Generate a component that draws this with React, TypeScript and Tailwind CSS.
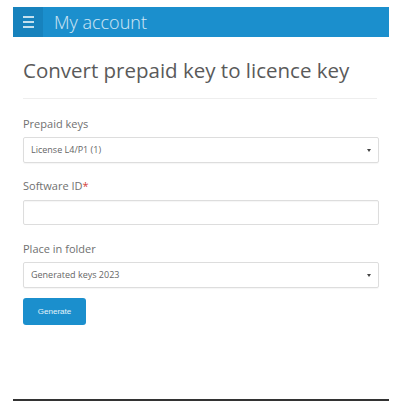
export default function App() {
	return (
		<div className="w-[402px] h-[402px] bg-white font-['Open_Sans',sans-serif] px-[13px] pt-[7px] flex flex-col">
			<header className="flex h-[30px] bg-[#1b8fcd]">
				<div className="w-[30px] bg-[#1782bd] flex items-center justify-center">
					<div className="flex flex-col gap-[3px]">
						<span className="block w-[11px] h-[2px] bg-white/75" />
						<span className="block w-[11px] h-[2px] bg-white/75" />
						<span className="block w-[11px] h-[2px] bg-white/75" />
					</div>
				</div>
				<h1 className="pl-[11px] text-[18px] font-light text-white/80 leading-[30px]">My account</h1>
			</header>

			<main className="px-[10px] pt-[18px] flex-1">
				<h2 className="text-[20.5px] leading-[30px] text-[#5a5a5a] font-normal">Convert prepaid key to licence key</h2>
				<hr className="mt-[13px] mr-[2px] border-t border-[#eee]" />

				<div className="pt-[18px]">
					<label className="block text-[11px] text-[#707070] leading-[14px]">Prepaid keys</label>
					<SelectBox value="License L4/P1 (1)" />

					<label className="block mt-[16px] text-[11px] text-[#707070] leading-[14px]">
						Software ID<span className="text-[#d43f3a]">*</span>
					</label>
					<div className="mt-[7px] h-[25px] border border-[#ddd] rounded-[2px] shadow-[inset_0_1px_1px_rgba(0,0,0,0.04)]" />

					<label className="block mt-[17px] text-[11px] text-[#707070] leading-[14px]">Place in folder</label>
					<SelectBox value="Generated keys 2023" />

					<button className="mt-[10px] w-[63px] h-[27px] rounded-[3px] bg-[#1b8fcd] text-white/90 text-[8px] font-['Liberation_Sans',sans-serif]">
						Generate
					</button>
				</div>
			</main>

			<div className="h-[2px] bg-[#333] mb-[1px]" />
		</div>
	)
}

function SelectBox({ value }: { value: string }) {
	return (
		<div className="mt-[6px] h-[26px] border border-[#ddd] rounded-[2px] flex items-center justify-between pl-[7px] pr-[7px] shadow-[0_1px_1px_rgba(0,0,0,0.04)]">
			<span className="text-[9px] text-[#666]">{value}</span>
			<span className="w-0 h-0 border-l-[2px] border-r-[2px] border-t-[3px] border-l-transparent border-r-transparent border-t-[#444]" />
		</div>
	)
}
